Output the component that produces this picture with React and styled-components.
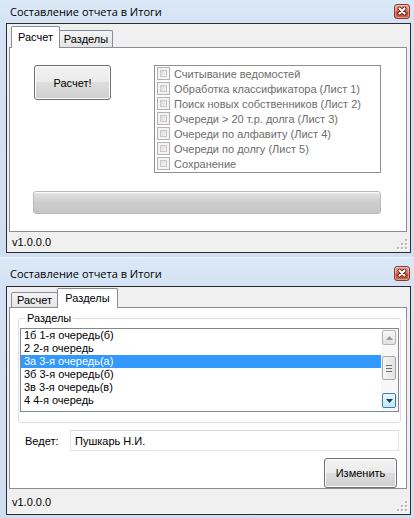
import React from 'react';
import styled, { createGlobalStyle } from 'styled-components';

const GlobalStyle = createGlobalStyle`
  html, body {
    margin: 0;
    padding: 0;
  }
  body {
    width: 414px;
    height: 518px;
    overflow: hidden;
    background: #cfdff2;
    font-family: "Liberation Sans", Arial, sans-serif;
    font-size: 11px;
    color: #000;
  }
`;

const STEPS = [
  'Считывание ведомостей',
  'Обработка классификатора (Лист 1)',
  'Поиск новых собственников (Лист 2)',
  'Очереди > 20 т.р. долга (Лист 3)',
  'Очереди по алфавиту (Лист 4)',
  'Очереди по долгу (Лист 5)',
  'Сохранение'
];

const SECTIONS = [
  '1б 1-я очередь(б)',
  '2 2-я очередь',
  '3а 3-я очередь(а)',
  '3б 3-я очередь(б)',
  '3в 3-я очередь(в)',
  '4 4-я очередь'
];

const CloseIcon = () => (
  <svg width="16" height="15" viewBox="0 0 16 15">
    <path d="M5.5 4.5 L10.5 9.5 M10.5 4.5 L5.5 9.5" stroke="#6b2317" strokeWidth="4" strokeLinecap="round" />
    <path d="M5.5 4.5 L10.5 9.5 M10.5 4.5 L5.5 9.5" stroke="#fff" strokeWidth="2.2" strokeLinecap="round" />
  </svg>
);

const Grip = () => (
  <GripBox width="11" height="11" viewBox="0 0 11 11">
    {[[8, 0], [8, 4], [4, 4], [8, 8], [4, 8], [0, 8]].map(([x, y]) => (
      <g key={`${x}-${y}`}>
        <rect x={x + 1} y={y + 1} width="2" height="2" fill="#fff" />
        <rect x={x} y={y} width="2" height="2" fill="#b8b8b8" />
      </g>
    ))}
  </GripBox>
);

const Arrow = ({ up, color }) => (
  <svg width="7" height="4" viewBox="0 0 7 4">
    <path d={up ? 'M0 4 L3.5 0 L7 4 Z' : 'M0 0 L3.5 4 L7 0 Z'} fill={color} />
  </svg>
);

function Window({ tabs, active, titleH, titleTop, stripH, panelH, statusH, children }) {
  return (
    <Frame>
      <TitleBar $h={titleH} $top={titleTop}>
        <Title>Составление отчета в Итоги</Title>
        <CloseButton>
          <CloseIcon />
        </CloseButton>
      </TitleBar>
      <Client>
        <TabArea>
          <TabStrip $h={stripH}>
            {tabs.map((tab, i) => (
              <Tab key={tab.label} $active={i === active} $w={tab.w} $h={tab.h} $first={i === 0}>
                {tab.label}
              </Tab>
            ))}
          </TabStrip>
          <TabPanel $h={panelH}>{children}</TabPanel>
        </TabArea>
        <StatusBar $h={statusH}>
          <span>v1.0.0.0</span>
          <Grip />
        </StatusBar>
      </Client>
    </Frame>
  );
}

export default function App() {
  return (
    <Page>
      <GlobalStyle />

      <Window
        titleH={23}
        titleTop={0}
        stripH={23}
        panelH={185}
        statusH={20}
        active={0}
        tabs={[
          { label: 'Расчет', w: 49, h: 22 },
          { label: 'Разделы', w: 54, h: 17 }
        ]}
      >
        <CalcBody>
          <CalcRow>
            <Button $w={77} $h={35} $ml={1}>Расчет!</Button>
            <StepGroup>
              {STEPS.map((step) => (
                <Step key={step}>
                  <CheckBox />
                  {step}
                </Step>
              ))}
            </StepGroup>
          </CalcRow>
          <Progress />
        </CalcBody>
      </Window>

      <Window
        titleH={28}
        titleTop={3}
        stripH={20}
        panelH={182}
        statusH={25}
        active={1}
        tabs={[
          { label: 'Расчет', w: 47, h: 15 },
          { label: 'Разделы', w: 61, h: 20 }
        ]}
      >
        <Sections>
          <legend>Разделы</legend>
          <ListBox>
            <Items>
              {SECTIONS.map((s, i) => (
                <Item key={s} $selected={i === 2}>{s}</Item>
              ))}
            </Items>
            <ScrollBar>
              <ScrollButton>
                <Arrow up color="#9a9a9a" />
              </ScrollButton>
              <Thumb>
                <i /><i /><i />
              </Thumb>
              <ScrollButton $hover>
                <Arrow color="#1c3d5e" />
              </ScrollButton>
            </ScrollBar>
          </ListBox>
        </Sections>
        <FieldRow>
          <FieldLabel>Ведет:</FieldLabel>
          <TextBox>Пушкарь Н.И.</TextBox>
        </FieldRow>
        <Actions>
          <Button $w={73} $h={30}>Изменить</Button>
        </Actions>
      </Window>
    </Page>
  );
}

const Page = styled.div`
  display: flex;
  flex-direction: column;
`;

const Frame = styled.div`
  padding: 0 3px 4px 6px;
  background: linear-gradient(#dbe8f6 0, #d3e2f4 30px, #cfdff2 100%);
  & + & {
    border-top: 1px solid #eef4fb;
  }
`;

const TitleBar = styled.div`
  box-sizing: border-box;
  height: ${p => p.$h}px;
  padding-top: ${p => p.$top}px;
  display: flex;
  align-items: center;
  justify-content: space-between;
`;

const Title = styled.div`
  padding-left: 4px;
  font-family: "Open Sans", "Noto Sans", sans-serif;
  font-size: 11px;
  color: #000;
`;

const CloseButton = styled.div`
  box-sizing: border-box;
  width: 16px;
  height: 15px;
  margin-right: 1px;
  border: 1px solid #8a3a2c;
  border-radius: 3px;
  background: linear-gradient(#e9a897 0, #d67a66 45%, #c2452f 55%, #cf6a4c 100%);
  box-shadow: inset 0 0 0 1px rgba(255, 255, 255, 0.35);
  display: flex;
  align-items: center;
  justify-content: center;
  svg {
    margin: -1px;
  }
`;

const Client = styled.div`
  border: 1px solid #2d2d2d;
  background: #f0f0f0;
  display: flex;
  flex-direction: column;
`;

const TabArea = styled.div`
  padding: 0 3px 0 2px;
`;

const TabStrip = styled.div`
  box-sizing: border-box;
  height: ${p => p.$h}px;
  padding-left: 2px;
  display: flex;
  align-items: flex-end;
`;

const Tab = styled.div`
  position: relative;
  box-sizing: border-box;
  width: ${p => p.$w}px;
  height: ${p => p.$h}px;
  margin-left: ${p => (p.$first ? 0 : -1)}px;
  margin-bottom: ${p => (p.$active ? -1 : 0)}px;
  padding-bottom: ${p => (p.$active ? 2 : 0)}px;
  border: 1px solid #898c95;
  border-bottom: none;
  border-radius: 2px 2px 0 0;
  background: ${p => (p.$active ? '#fff' : 'linear-gradient(#f4f4f4, #e4e4e4)')};
  z-index: ${p => (p.$active ? 1 : 0)};
  display: flex;
  align-items: center;
  justify-content: center;
`;

const TabPanel = styled.div`
  box-sizing: border-box;
  height: ${p => p.$h}px;
  border: 1px solid #898c95;
  background: #fff;
  display: flex;
  flex-direction: column;
`;

const StatusBar = styled.div`
  box-sizing: border-box;
  height: ${p => p.$h}px;
  padding: 2px 2px 2px 5px;
  display: flex;
  align-items: center;
  justify-content: space-between;
  background: #f0f0f0;
`;

const GripBox = styled.svg`
  align-self: flex-end;
`;

const Button = styled.div`
  box-sizing: border-box;
  width: ${p => p.$w}px;
  height: ${p => p.$h}px;
  margin-left: ${p => p.$ml || 0}px;
  border: 1px solid #707070;
  border-radius: 3px;
  background: linear-gradient(#f2f2f2 0, #ebebeb 50%, #dddddd 50%, #cfcfcf 100%);
  box-shadow: inset 0 0 0 1px #fcfcfc;
  display: flex;
  align-items: center;
  justify-content: center;
  flex: none;
`;

const CalcBody = styled.div`
  padding: 17px 25px 0 23px;
`;

const CalcRow = styled.div`
  display: flex;
  align-items: flex-start;
  gap: 43px;
`;

const StepGroup = styled.div`
  box-sizing: border-box;
  width: 227px;
  height: 108px;
  border: 1px solid #8f8f8f;
  padding-left: 2px;
`;

const Step = styled.div`
  height: 15px;
  display: flex;
  align-items: center;
  gap: 4px;
  color: #6d6d6d;
  white-space: nowrap;
`;

const CheckBox = styled.span`
  box-sizing: border-box;
  width: 13px;
  height: 13px;
  border: 1px solid #b3b3b3;
  background: #f4f4f4;
  padding: 2px;
  flex: none;
  &::before {
    content: '';
    display: block;
    width: 100%;
    height: 100%;
    box-sizing: border-box;
    border: 1px solid #c9c9c9;
    background: linear-gradient(135deg, #dcdcdc, #f3f3f3);
  }
`;

const Progress = styled.div`
  box-sizing: border-box;
  width: 348px;
  height: 23px;
  margin-top: 18px;
  border: 1px solid #b9b9b9;
  border-radius: 3px;
  background: linear-gradient(#f4f4f4 0, #dedede 12%, #cdcdcd 50%, #c6c6c6 100%);
  box-shadow: inset 0 1px 0 #fafafa;
`;

const Sections = styled.fieldset`
  margin: 3px 5px 0 8px;
  padding: 3px 1px 10px 1px;
  border: 1px solid #d5dfe5;
  border-radius: 3px;
  box-shadow: inset 0 0 0 1px #fff;

  legend {
    margin-left: 5px;
    padding: 0 2px;
    line-height: 14px;
  }
`;

const ListBox = styled.div`
  display: flex;
  height: 82px;
  border: 1px solid #828790;
  background: #fff;
`;

const Items = styled.div`
  flex: 1;
`;

const Item = styled.div`
  height: 13px;
  line-height: 13px;
  padding-left: 3px;
  white-space: nowrap;
  background: ${p => (p.$selected ? '#3399ff' : 'transparent')};
  color: ${p => (p.$selected ? '#fff' : '#000')};
`;

const ScrollBar = styled.div`
  width: 17px;
  padding: 1px 2px 3px 1px;
  box-sizing: border-box;
  display: flex;
  flex-direction: column;
  align-items: center;
  background: #f7f7f7;
`;

const ScrollButton = styled.div`
  box-sizing: border-box;
  width: 14px;
  height: 15px;
  border: 1px solid ${p => (p.$hover ? '#3c7fb1' : '#b5b5b5')};
  border-radius: 2px;
  background: ${p => (p.$hover
    ? 'linear-gradient(#e8f6fd, #c4e5f7)'
    : 'linear-gradient(#f8f8f8, #e1e1e1)')};
  display: flex;
  align-items: center;
  justify-content: center;
  margin-top: auto;
  &:first-child {
    margin-top: 0;
  }
`;

const Thumb = styled.div`
  box-sizing: border-box;
  width: 14px;
  height: 24px;
  margin-top: 11px;
  border: 1px solid #a9a9a9;
  border-radius: 2px;
  background: linear-gradient(90deg, #f5f5f5, #e2e2e2);
  display: flex;
  flex-direction: column;
  align-items: center;
  justify-content: center;
  gap: 2px;

  i {
    display: block;
    width: 6px;
    height: 1px;
    background: #6f6f6f;
  }
`;

const FieldRow = styled.div`
  display: flex;
  align-items: center;
  margin: 7px 7px 0 15px;
`;

const FieldLabel = styled.div`
  width: 45px;
  flex: none;
`;

const TextBox = styled.div`
  box-sizing: border-box;
  flex: 1;
  height: 21px;
  padding-left: 4px;
  border: 1px solid #e2e5ea;
  border-top-color: #d4d8de;
  display: flex;
  align-items: center;
`;

const Actions = styled.div`
  display: flex;
  justify-content: flex-end;
  margin: 7px 9px 0 0;
`;
